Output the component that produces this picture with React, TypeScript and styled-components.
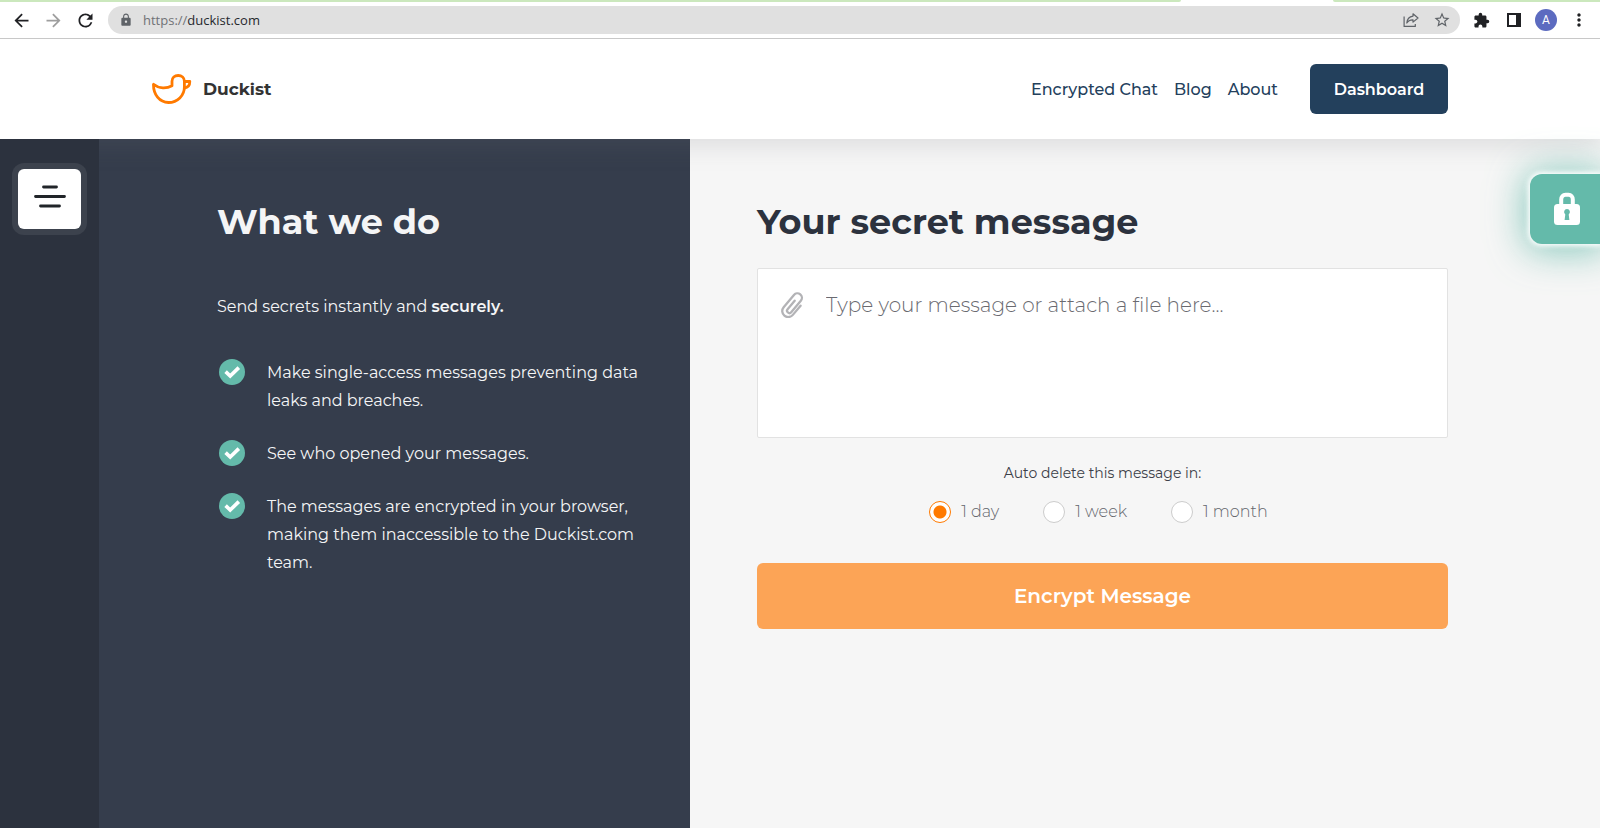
import React, { useState } from "react";
import styled, { createGlobalStyle } from "styled-components";
import {
  MdArrowBack,
  MdArrowForward,
  MdRefresh,
  MdLock,
  MdStarBorder,
  MdExtension,
  MdMoreVert,
} from "react-icons/md";

const GlobalStyle = createGlobalStyle`
  *, *::before, *::after { box-sizing: border-box; }
  body {
    margin: 0;
    background: #f6f6f6;
    color: #2c323e;
    font-family: Montserrat, Inter, "Open Sans", sans-serif;
    font-size: 16px;
  }
  button, input, textarea { font: inherit; color: inherit; }
  button { cursor: pointer; }
`;

const Page = styled.div`
  display: flex;
  flex-direction: column;
  min-height: 100vh;
`;

/* Browser chrome */

const Browser = styled.div`
  position: relative;
  z-index: 2;
  background: #fff;
  border-bottom: 1px solid #c8c8c8;
`;

const TabStrip = styled.div`
  display: flex;
  gap: 152px;
  height: 2px;
`;

const TabEdge = styled.div<{ $grow: number; $side: "left" | "right" }>`
  flex: ${(p) => p.$grow} 1 0;
  background: #cbe8bd;
  border-radius: ${(p) => (p.$side === "left" ? "0 0 4px 0" : "0 0 0 4px")};
`;

const Toolbar = styled.div`
  display: flex;
  align-items: center;
  height: 36px;
  padding: 0 11px;
  gap: 11px;
`;

const ToolButton = styled.button<{ $color?: string }>`
  display: flex;
  align-items: center;
  justify-content: center;
  width: 21px;
  height: 28px;
  padding: 0;
  border: 0;
  background: none;
  color: ${(p) => p.$color ?? "#202124"};
`;

const NavTools = styled.div`
  display: flex;
  gap: 11px;
  margin-right: 1px;
`;

const AddressBar = styled.div`
  display: flex;
  flex: 1;
  align-items: center;
  height: 28px;
  padding: 0 8px 0 11px;
  border-radius: 14px;
  background: #e0e0e0;
  color: #5f6368;
  gap: 10px;
`;

const Address = styled.label`
  display: flex;
  flex: 1;
  align-items: center;
  color: #707276;
  font-family: "Open Sans", "Noto Sans", sans-serif;
  font-size: 13px;
  line-height: 20px;
`;

const AddressInput = styled.input`
  flex: 1;
  min-width: 0;
  padding: 0;
  border: 0;
  outline: 0;
  background: none;
  color: #26282c;
`;

const Avatar = styled.button`
  width: 22px;
  height: 22px;
  padding: 0;
  border: 0;
  border-radius: 50%;
  background: #5c6bc0;
  color: #fff;
  font-family: Roboto, sans-serif;
  font-size: 12px;
  line-height: 22px;
`;

/* Site header */

const Header = styled.header`
  position: relative;
  z-index: 1;
  background: #fff;
  box-shadow: 0 4px 26px rgba(109, 109, 120, 0.22);
`;

const HeaderInner = styled.div`
  display: flex;
  align-items: center;
  justify-content: space-between;
  max-width: 1296px;
  height: 100px;
  margin: 0 auto;
`;

const Brand = styled.a`
  display: flex;
  align-items: center;
  gap: 11px;
  color: #333;
  font-size: 17px;
  font-weight: 700;
  text-decoration: none;
`;

const Nav = styled.nav`
  display: flex;
  align-items: center;
  gap: 16px;
`;

const NavLink = styled.a`
  color: #23405c;
  font-weight: 500;
  text-decoration: none;
`;

const DashboardButton = styled.button`
  width: 138px;
  height: 50px;
  margin-left: 16px;
  padding: 0;
  border: 0;
  border-radius: 6px;
  background: #23405c;
  color: #fff;
  font-weight: 600;
`;

/* Page body */

const Body = styled.main`
  display: grid;
  flex: 1;
  grid-template-columns: 99px minmax(0, 591fr) minmax(0, 910fr);
`;

const Sidebar = styled.aside`
  position: relative;
  z-index: 2;
  padding: 30px 18px;
  background: #2c323e;
`;

const MenuButton = styled.button`
  display: flex;
  justify-content: center;
  width: 63px;
  height: 60px;
  padding: 15px 0 0;
  border: 0;
  border-radius: 6px;
  background: #fff;
  box-shadow: 0 0 0 6px #3c424d;
`;

const About = styled.section`
  padding: 57px 40px 56px 118px;
  background: #353d4c;
  color: #f4f5f6;
`;

const Title = styled.h2`
  margin: 0;
  font-size: 35px;
  font-weight: 700;
  line-height: 52px;
`;

const Lead = styled.p`
  margin: 45px 0 38px;
  line-height: 28px;
`;

const Strong = styled.strong`
  font-weight: 600;
`;

const Features = styled.ul`
  display: flex;
  flex-direction: column;
  gap: 25px;
  margin: 0;
  padding: 0 0 0 2px;
  list-style: none;
`;

const Feature = styled.li`
  display: flex;
  gap: 22px;
  line-height: 28px;

  svg {
    flex: none;
  }
`;

const Composer = styled.form`
  padding: 57px 152px 56px 67px;
  background: #f6f6f6;
`;

const MessageBox = styled.div`
  display: flex;
  gap: 20px;
  height: 170px;
  margin-top: 20px;
  padding: 23px 22px 10px;
  border: 1px solid #e2e2e2;
  border-radius: 2px;
  background: #fff;
`;

const AttachButton = styled.button`
  width: 26px;
  height: 26px;
  padding: 0;
  border: 0;
  background: none;
`;

const MessageInput = styled.textarea`
  flex: 1;
  min-width: 0;
  padding: 0;
  border: 0;
  outline: 0;
  resize: none;
  background: none;
  font-size: 20px;
  font-weight: 300;
  line-height: 26px;

  &::placeholder {
    color: #6a6a70;
    opacity: 1;
  }
`;

const Expiry = styled.fieldset`
  margin: 0;
  padding: 25px 8px 0 0;
  border: 0;
  text-align: center;
`;

const ExpiryLabel = styled.legend`
  float: left;
  width: 100%;
  padding: 0 0 0 8px;
  color: #3c4048;
  font-size: 14px;
  line-height: 20px;
`;

const Options = styled.div`
  display: flex;
  clear: both;
  justify-content: center;
  gap: 44px;
  padding-top: 18px;
`;

const Option = styled.label`
  display: flex;
  align-items: center;
  gap: 10px;
  color: #63656c;
  font-size: 16px;
  font-weight: 300;
  line-height: 22px;
`;

const Radio = styled.input`
  width: 22px;
  height: 22px;
  margin: 0;
  appearance: none;
  border: 1px solid #ccc;
  border-radius: 50%;
  background: #fff;

  &:checked {
    border-color: #ff7a00;
    background: radial-gradient(circle, #ff7a00 6px, #fff 7px);
  }
`;

const EncryptButton = styled.button`
  width: 100%;
  height: 66px;
  margin-top: 40px;
  padding: 0;
  border: 0;
  border-radius: 6px;
  background: #fca456;
  color: #fff;
  font-size: 20px;
  font-weight: 600;
`;

const LockTab = styled.button`
  position: fixed;
  top: 174px;
  right: 0;
  z-index: 3;
  display: flex;
  align-items: center;
  justify-content: center;
  width: 70px;
  height: 70px;
  padding: 0 0 0 4px;
  border: 0;
  border-radius: 12px 0 0 12px;
  background: #64baaa;
  box-shadow: 0 0 5px 2px #fff, 0 2px 36px 6px rgba(100, 186, 170, 0.75);
`;

const DuckLogo = () => (
  <svg width="40" height="30" viewBox="0 0 40 30" fill="none" stroke="#ff7a00" strokeWidth="2.8" strokeLinecap="round" strokeLinejoin="round" aria-hidden="true">
    <path d="M1.5 10.3C1.2 20.5 7.5 28.5 16.5 28.5C25.5 28.5 32.4 21.5 32.4 13V7.3C32.4 3.8 29.6 1.5 26.2 1.5C22.6 1.5 20 3.8 20 7.3V11.8C15 14.5 7 15 1.5 10.3Z" />
    <path d="M32.4 7.5H37.8C37.8 11.2 35.8 13.6 32.4 14" />
  </svg>
);

const PaperclipIcon = () => (
  <svg width="24" height="26" viewBox="0 0 24 26" fill="none" stroke="#b3b3b6" strokeWidth="2.3" strokeLinecap="round" aria-hidden="true">
    <path
      transform="translate(12.4 12.9) rotate(40)"
      d="M6 -4V8A6 6 0 0 1 -6 8V-8A4.5 4.5 0 0 1 3 -8V7A2.25 2.25 0 0 1 -1.7 7V-4"
    />
  </svg>
);

const ShareIcon = () => (
  <svg width="16" height="16" viewBox="0 0 16 16" fill="none" stroke="#5f6368" strokeWidth="1.2" strokeLinejoin="round" aria-hidden="true">
    <path d="M1.1 4.5V14.4H12.3V12" />
    <path d="M10 1.8L15 6L10 10.1V7.8C7.2 7.7 5 8.8 3.8 11C4.1 7.2 6.2 4.7 10 4.1Z" />
  </svg>
);

const SidePanelIcon = () => (
  <svg width="14" height="14" viewBox="0 0 14 14" aria-hidden="true">
    <path d="M0 0H14V14H0ZM2 2V12H9V2Z" fill="#202124" fillRule="evenodd" />
  </svg>
);

const MenuIcon = () => (
  <svg width="32" height="24" viewBox="0 0 32 24" fill="none" stroke="#212529" strokeWidth="2.8" strokeLinecap="round" aria-hidden="true">
    <path d="M9.5 3H22.5M1.5 12.5H30.5M6.5 22H25.5" />
  </svg>
);

const CheckIcon = () => (
  <svg width="26" height="26" viewBox="0 0 26 26" aria-hidden="true">
    <circle cx="13" cy="13" r="13" fill="#64baaa" />
    <path d="M6.6 12.6L11.2 17L19.8 8.6" fill="none" stroke="#fff" strokeWidth="3.6" />
  </svg>
);

const PadlockIcon = () => (
  <svg width="26" height="34" viewBox="0 0 26 34" aria-hidden="true">
    <path d="M7.2 14V7.5C7.2 4.6 9 2.8 11.5 2.8H14.5C17 2.8 18.8 4.6 18.8 7.5V14" fill="none" stroke="#fff" strokeWidth="4" />
    <rect y="12" width="26" height="21" rx="3.5" fill="#fff" />
    <path d="M13 17A3 3 0 0 1 14.7 22.4L15.4 28H10.6L11.3 22.4A3 3 0 0 1 13 17Z" fill="#64baaa" />
  </svg>
);

const features = [
  "Make single-access messages preventing data leaks and breaches.",
  "See who opened your messages.",
  "The messages are encrypted in your browser, making them inaccessible to the Duckist.com team.",
];

const lifetimes = ["1 day", "1 week", "1 month"];

export default function App() {
  const [lifetime, setLifetime] = useState(lifetimes[0]);

  return (
    <Page>
      <GlobalStyle />
      <Browser>
        <TabStrip>
          <TabEdge $grow={1181} $side="left" />
          <TabEdge $grow={267} $side="right" />
        </TabStrip>
        <Toolbar>
          <NavTools>
            <ToolButton aria-label="Back"><MdArrowBack size={21} /></ToolButton>
            <ToolButton aria-label="Forward" $color="#9e9e9e"><MdArrowForward size={21} /></ToolButton>
            <ToolButton aria-label="Reload"><MdRefresh size={21} /></ToolButton>
          </NavTools>
          <AddressBar>
            <MdLock size={14} />
            <Address>
              https://
              <AddressInput aria-label="Address" defaultValue="duckist.com" />
            </Address>
            <ToolButton aria-label="Share"><ShareIcon /></ToolButton>
            <ToolButton aria-label="Bookmark" $color="#5f6368"><MdStarBorder size={18} /></ToolButton>
          </AddressBar>
          <ToolButton aria-label="Extensions"><MdExtension size={17} /></ToolButton>
          <ToolButton aria-label="Side panel"><SidePanelIcon /></ToolButton>
          <Avatar aria-label="Profile">A</Avatar>
          <ToolButton aria-label="Menu"><MdMoreVert size={20} /></ToolButton>
        </Toolbar>
      </Browser>

      <Header>
        <HeaderInner>
          <Brand href="#home">
            <DuckLogo />
            Duckist
          </Brand>
          <Nav>
            <NavLink href="#chat">Encrypted Chat</NavLink>
            <NavLink href="#blog">Blog</NavLink>
            <NavLink href="#about">About</NavLink>
            <DashboardButton type="button">Dashboard</DashboardButton>
          </Nav>
        </HeaderInner>
      </Header>

      <Body>
        <Sidebar>
          <MenuButton type="button" aria-label="Open menu"><MenuIcon /></MenuButton>
        </Sidebar>
        <About>
          <Title>What we do</Title>
          <Lead>
            Send secrets instantly and <Strong>securely.</Strong>
          </Lead>
          <Features>
            {features.map((text) => (
              <Feature key={text}>
                <CheckIcon />
                <span>{text}</span>
              </Feature>
            ))}
          </Features>
        </About>
        <Composer onSubmit={(e) => e.preventDefault()}>
          <Title as="h1">Your secret message</Title>
          <MessageBox>
            <AttachButton type="button" aria-label="Attach a file"><PaperclipIcon /></AttachButton>
            <MessageInput aria-label="Your secret message" placeholder="Type your message or attach a file here..." />
          </MessageBox>
          <Expiry>
            <ExpiryLabel>Auto delete this message in:</ExpiryLabel>
            <Options>
              {lifetimes.map((value) => (
                <Option key={value}>
                  <Radio
                    type="radio"
                    name="lifetime"
                    value={value}
                    checked={lifetime === value}
                    onChange={() => setLifetime(value)}
                  />
                  {value}
                </Option>
              ))}
            </Options>
          </Expiry>
          <EncryptButton type="submit">Encrypt Message</EncryptButton>
        </Composer>
      </Body>

      <LockTab type="button" aria-label="Encrypted chat"><PadlockIcon /></LockTab>
    </Page>
  );
}
